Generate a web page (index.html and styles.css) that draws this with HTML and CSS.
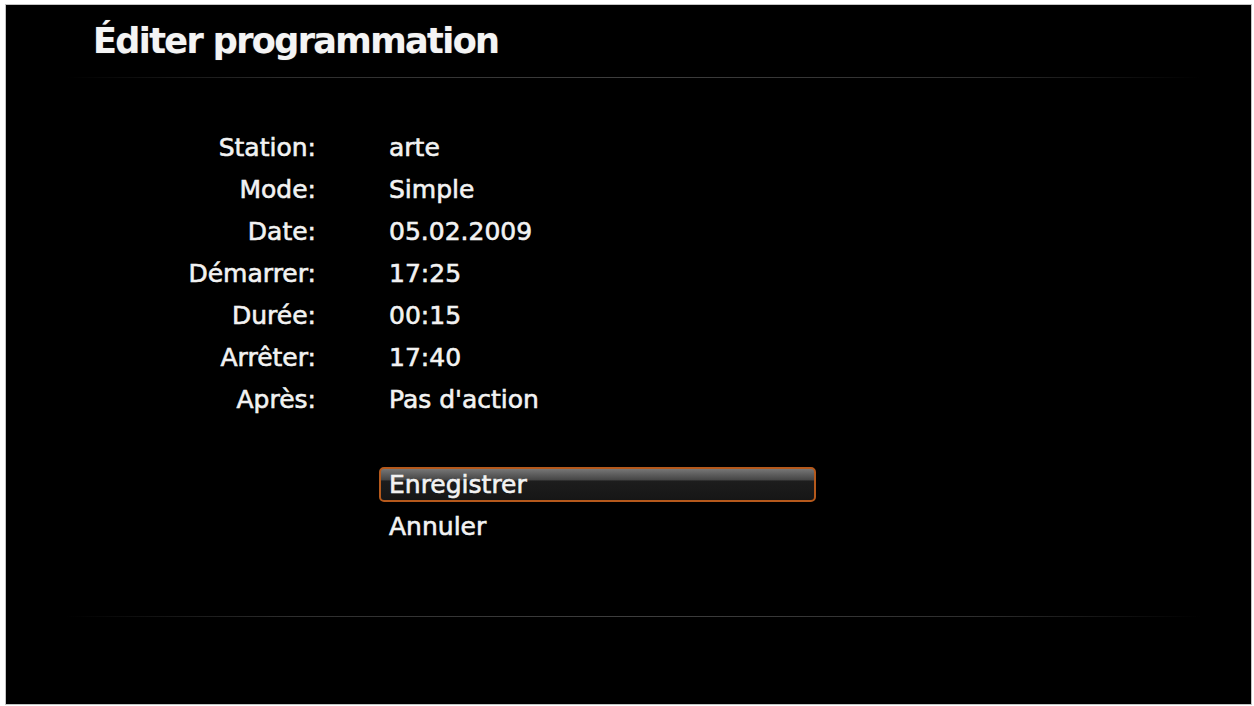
FILE: index.html
```html
<!DOCTYPE html>
<html lang="fr">
<head>
<meta charset="utf-8">
<title>Éditer programmation</title>
<link rel="stylesheet" href="styles.css">
</head>
<body>
<div class="screen">
  <h1 class="title">Éditer programmation</h1>
  <div class="rule rule-top"></div>
  <div class="fields">
    <div class="label">Station:</div><div class="value">arte</div>
    <div class="label">Mode:</div><div class="value">Simple</div>
    <div class="label">Date:</div><div class="value">05.02.2009</div>
    <div class="label">Démarrer:</div><div class="value">17:25</div>
    <div class="label">Durée:</div><div class="value">00:15</div>
    <div class="label">Arrêter:</div><div class="value">17:40</div>
    <div class="label">Après:</div><div class="value">Pas d'action</div>
  </div>
  <div class="menu">
    <div class="item selected">Enregistrer</div>
    <div class="item">Annuler</div>
  </div>
  <div class="rule rule-bottom"></div>
</div>
</body>
</html>
```
FILE: styles.css
```css
html, body {
  margin: 0;
  padding: 0;
  background: #ffffff;
}
body {
  width: 1254px;
  height: 706px;
  overflow: hidden;
}
.screen {
  margin: 5px 3px 2px 6px;
  width: 1245px;
  height: 699px;
  background: #000;
  box-shadow: 0 0 0 1px #c4c4c4;
  padding-top: 16px;
  box-sizing: border-box;
  display: flex;
  flex-direction: column;
  font-family: "DejaVu Sans", Verdana, sans-serif;
  color: #f2f2f2;
}
.title {
  margin: 0 0 0 87px;
  font-size: 35px;
  font-weight: bold;
  letter-spacing: -1.6px;
  line-height: 40px;
  color: #f4f4f4;
  text-shadow: 0 0 1px rgba(255,255,255,0.4);
}
.rule {
  height: 1px;
  margin-left: 60px;
  margin-right: 50px;
  background: linear-gradient(to right, rgba(60,60,60,0) 0%, #2e2e2e 20%, #3e3e3e 50%, #2e2e2e 80%, rgba(60,60,60,0) 100%);
}
.rule-top {
  margin-top: 16px;
}
.rule-bottom {
  margin-top: 72px;
}
.fields {
  margin-top: 49px;
  display: grid;
  grid-template-columns: 310px auto;
  column-gap: 73px;
  font-size: 25px;
  line-height: 42px;
  -webkit-text-stroke: 0.6px #f2f2f2;
}
.label {
  text-align: right;
}
.menu {
  margin-top: 46px;
  margin-left: 373px;
  width: 437px;
  display: flex;
  flex-direction: column;
  gap: 7px;
  font-size: 25px;
  -webkit-text-stroke: 0.6px #f2f2f2;
}
.item {
  height: 35px;
  box-sizing: border-box;
  border: 2px solid transparent;
  border-radius: 5px;
  line-height: 31px;
  padding-left: 8px;
}
.item.selected {
  border-color: #b5591c;
  background: linear-gradient(to bottom, #767676 0%, #5a5a5a 20%, #444 36%, #1d1d1d 38%, #161616 100%);
}
```
